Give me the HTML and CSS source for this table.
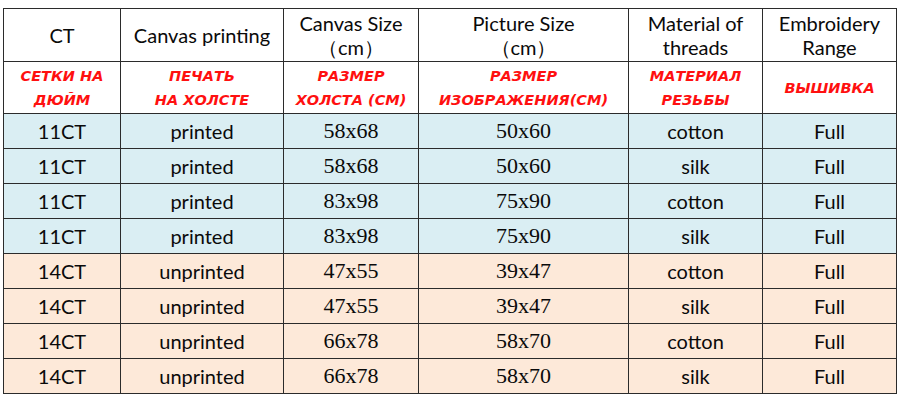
FILE: index.html
```html
<!DOCTYPE html>
<html>
<head>
<meta charset="utf-8">
<link rel="stylesheet" href="styles.css">
</head>
<body>
<table class="spec">
  <colgroup>
    <col class="c1"><col class="c2"><col class="c3"><col class="c4"><col class="c5"><col class="c6">
  </colgroup>
  <tr class="head">
    <td>CT</td>
    <td>Canvas printing</td>
    <td>Canvas Size<br>（cm）</td>
    <td>Picture Size<br>（cm）</td>
    <td>Material of<br>threads</td>
    <td>Embroidery<br>Range</td>
  </tr>
  <tr class="ru">
    <td>СЕТКИ НА<br>ДЮЙМ</td>
    <td>ПЕЧАТЬ<br>НА ХОЛСТЕ</td>
    <td>РАЗМЕР<br>ХОЛСТА (СМ)</td>
    <td>РАЗМЕР<br>ИЗОБРАЖЕНИЯ(СМ)</td>
    <td>МАТЕРИАЛ<br>РЕЗЬБЫ</td>
    <td>ВЫШИВКА</td>
  </tr>
  <tr class="blue"><td>11CT</td><td>printed</td><td class="num">58x68</td><td class="num">50x60</td><td>cotton</td><td>Full</td></tr>
  <tr class="blue"><td>11CT</td><td>printed</td><td class="num">58x68</td><td class="num">50x60</td><td>silk</td><td>Full</td></tr>
  <tr class="blue"><td>11CT</td><td>printed</td><td class="num">83x98</td><td class="num">75x90</td><td>cotton</td><td>Full</td></tr>
  <tr class="blue"><td>11CT</td><td>printed</td><td class="num">83x98</td><td class="num">75x90</td><td>silk</td><td>Full</td></tr>
  <tr class="peach"><td>14CT</td><td>unprinted</td><td class="num">47x55</td><td class="num">39x47</td><td>cotton</td><td>Full</td></tr>
  <tr class="peach"><td>14CT</td><td>unprinted</td><td class="num">47x55</td><td class="num">39x47</td><td>silk</td><td>Full</td></tr>
  <tr class="peach"><td>14CT</td><td>unprinted</td><td class="num">66x78</td><td class="num">58x70</td><td>cotton</td><td>Full</td></tr>
  <tr class="peach"><td>14CT</td><td>unprinted</td><td class="num">66x78</td><td class="num">58x70</td><td>silk</td><td>Full</td></tr>
</table>
</body>
</html>
```
FILE: styles.css
```css
html, body {
  margin: 0;
  background: #ffffff;
}
body {
  padding: 8px 0 0 3px;
}
.spec {
  border-collapse: collapse;
  table-layout: fixed;
  width: 893px;
  font-family: Lato, "Open Sans", sans-serif;
  font-size: 20px;
  color: #0a0a0a;
}
.c1 { width: 117px; }
.c2 { width: 163px; }
.c3 { width: 135px; }
.c4 { width: 210px; }
.c5 { width: 134px; }
.c6 { width: 134px; }
.spec td {
  border: 1px solid #2b2b2b;
  text-align: center;
  vertical-align: middle;
  padding: 0;
  line-height: 24px;
}
.spec .head td {
  height: 52px;
}
.spec .ru td {
  height: 51px;
  color: #ff1010;
  font-family: "DejaVu Sans", sans-serif;
  font-weight: bold;
  font-style: italic;
  font-size: 14.5px;
  line-height: 24px;
}
.spec .blue td,
.spec .peach td {
  height: 34px;
}
.blue td { background: #daeef3; }
.peach td { background: #fde9d9; }
.spec td.num {
  font-family: "Liberation Serif", serif;
  font-size: 22px;
}
```
